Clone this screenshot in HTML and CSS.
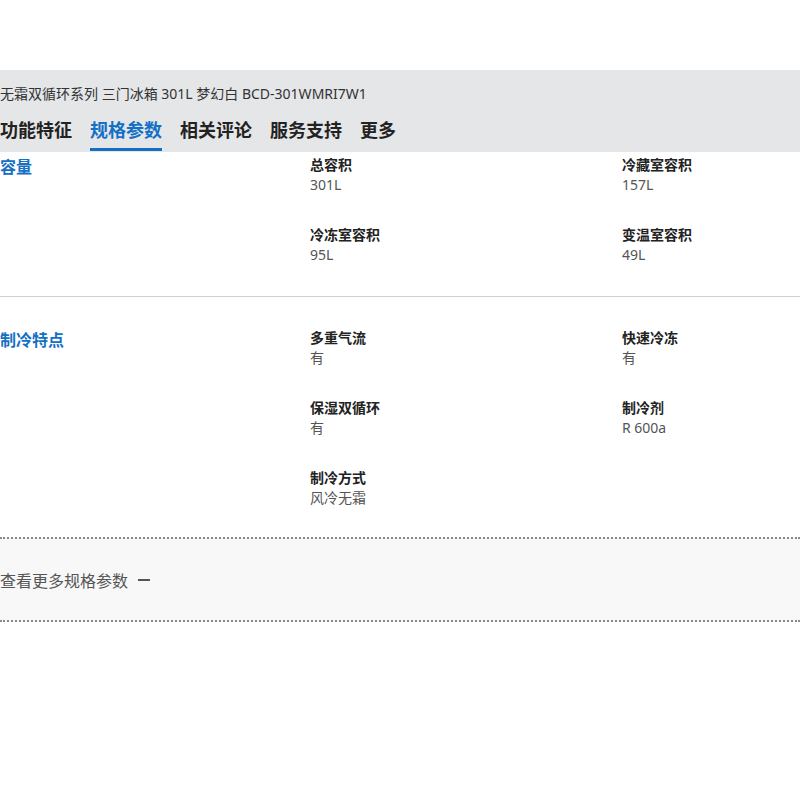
FILE: index.html
```html
<!DOCTYPE html>
<html lang="zh-CN">
<head>
    <meta charset="UTF-8">
    <meta name="viewport" content="width=device-width, initial-scale=1.0">
    <title>BCD-301WMRI7W1 规格参数</title>
    <link rel="stylesheet" href="styles.css">
</head>
<body>
    <div class="product-header">
        <div class="product-title">无霜双循环系列 三门冰箱 301L 梦幻白 BCD-301WMRI7W1</div>
        <nav class="tabs">
            <a class="tab">功能特征</a>
            <a class="tab active">规格参数</a>
            <a class="tab">相关评论</a>
            <a class="tab">服务支持</a>
            <a class="tab">更多</a>
        </nav>
    </div>

    <div class="spec-section first">
        <h3 class="spec-category">容量</h3>
        <div class="spec-grid">
            <div class="spec-item">
                <div class="spec-label">总容积</div>
                <div class="spec-value">301L</div>
            </div>
            <div class="spec-item">
                <div class="spec-label">冷藏室容积</div>
                <div class="spec-value">157L</div>
            </div>
            <div class="spec-item">
                <div class="spec-label">冷冻室容积</div>
                <div class="spec-value">95L</div>
            </div>
            <div class="spec-item">
                <div class="spec-label">变温室容积</div>
                <div class="spec-value">49L</div>
            </div>
        </div>
    </div>

    <div class="spec-section last">
        <h3 class="spec-category">制冷特点</h3>
        <div class="spec-grid">
            <div class="spec-item">
                <div class="spec-label">多重气流</div>
                <div class="spec-value">有</div>
            </div>
            <div class="spec-item">
                <div class="spec-label">快速冷冻</div>
                <div class="spec-value">有</div>
            </div>
            <div class="spec-item">
                <div class="spec-label">保湿双循环</div>
                <div class="spec-value">有</div>
            </div>
            <div class="spec-item">
                <div class="spec-label">制冷剂</div>
                <div class="spec-value">R 600a</div>
            </div>
            <div class="spec-item">
                <div class="spec-label">制冷方式</div>
                <div class="spec-value">风冷无霜</div>
            </div>
        </div>
    </div>

    <div class="more-specs">
        <span>查看更多规格参数</span>
        <span class="more-icon"></span>
    </div>
</body>
</html>
```

FILE: styles.css
```css
body {
    margin: 0;
    padding-top: 70px;
    font-family: "Noto Sans", "Noto Sans CJK SC", sans-serif;
    background-color: #ffffff;
    color: #333;
}
.product-header {
    background-color: #e5e6e8;
    padding: 14px 0 1px 0;
}
.product-title {
    font-size: 14px;
    line-height: 20px;
    color: #333;
}
.tabs {
    display: flex;
    gap: 18px;
    margin-top: 14px;
}
.tab {
    font-size: 18px;
    font-weight: bold;
    line-height: 24px;
    color: #222;
    padding-bottom: 6px;
    border-bottom: 3px solid transparent;
    cursor: pointer;
}
.tab.active {
    color: #1470c4;
    border-bottom-color: #1470c4;
}
.spec-section {
    display: grid;
    grid-template-columns: 310px 1fr;
    padding: 31px 0 31px 0;
    border-bottom: 1px solid #cfcfcf;
}
.spec-section.first {
    padding-top: 3px;
}
.spec-section.last {
    border-bottom: none;
    padding-bottom: 29px;
}
.spec-category {
    margin: 0;
    font-size: 16px;
    line-height: 24px;
    font-weight: bold;
    color: #1470c4;
}
.spec-grid {
    display: grid;
    grid-template-columns: 312px 1fr;
    row-gap: 30px;
}
.spec-label {
    font-size: 14px;
    line-height: 20px;
    font-weight: bold;
    color: #222;
}
.spec-value {
    font-size: 14px;
    line-height: 20px;
    color: #555;
}
.more-specs {
    display: flex;
    align-items: center;
    gap: 10px;
    height: 81px;
    background-color: #f8f8f8;
    border-top: 2px dotted #8a8a8a;
    border-bottom: 2px dotted #8a8a8a;
    font-size: 16px;
    color: #555;
}
.more-icon {
    width: 12px;
    height: 2px;
    background-color: #555;
}
```
